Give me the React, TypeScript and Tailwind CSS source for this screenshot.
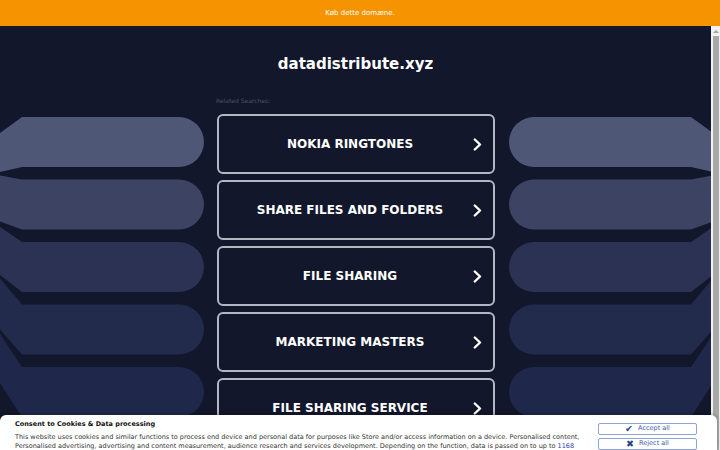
import { Fragment } from "react"

const searches = [
  "NOKIA RINGTONES",
  "SHARE FILES AND FOLDERS",
  "FILE SHARING",
  "MARKETING MASTERS",
  "FILE SHARING SERVICE",
]

// band colours from top to bottom, plus how far the slanted end drifts at the page edge
const bands = [
  { fill: "#4f5777", top: 16, bottom: 5 },
  { fill: "#3d4463", top: -4, bottom: -8 },
  { fill: "#2b3253", top: -15, bottom: -17 },
  { fill: "#232b4d", top: -26, bottom: -25 },
  { fill: "#1f284b", top: -33, bottom: -34 },
]

function SideArt({ flip }: { flip?: boolean }) {
  return (
    <svg width={flip ? 216 : 217} height={353} className="block shrink-0">
      <g transform={flip ? "translate(218,0) scale(-1,1)" : undefined}>
        {bands.map((b, i) => {
          const t = 20 + 62.5 * i
          const btm = t + 50
          return (
            <path
              key={i}
              fill={b.fill}
              d={`M0 ${t + b.top} L22 ${t} L179 ${t} A25 25 0 0 1 179 ${btm} L22 ${btm} L0 ${btm + b.bottom} Z`}
            />
          )
        })}
      </g>
    </svg>
  )
}

function Chevron() {
  return (
    <svg width="9" height="13" viewBox="0 0 9 13" className="shrink-0">
      <path d="M1.8 1.5 L7 6.5 L1.8 11.5" fill="none" stroke="white" strokeWidth="2.4" strokeLinecap="round" strokeLinejoin="round" />
    </svg>
  )
}

export default function App() {
  return (
    <div className="relative h-[450px] w-[720px] overflow-hidden bg-[#12172b] font-['DejaVu_Sans',sans-serif]">
      {/* Top banner */}
      <div className="flex h-[26px] items-center justify-center bg-[#f59300] text-[7px] text-white">
        Køb dette domæne.
      </div>

      <div className="flex h-[424px]">
        <div className="flex flex-1 flex-col">
          <h1 className="mt-[29px] text-center text-[15px] font-bold leading-[18px] text-white">datadistribute.xyz</h1>

          <div className="mt-[24px] flex">
            <SideArt />
            <div className="flex w-[278px] shrink-0 flex-col">
              <p className="-ml-px h-[8px] text-[6px] leading-[8px] text-[#4b5369]">Related Searches:</p>
              <div className="mt-[9px] flex flex-col gap-[6px]">
                {searches.map((s) => (
                  <div
                    key={s}
                    className="flex h-[60px] items-center rounded-[6px] border-2 border-[#b4b7c3] pl-[8px] pr-[11px]"
                  >
                    <span className="flex-1 text-center text-[12px] font-bold text-white">{s}</span>
                    <Chevron />
                  </div>
                ))}
              </div>
            </div>
            <SideArt flip />
          </div>
        </div>

        {/* Scrollbar */}
        <div className="flex w-[9px] flex-col bg-[#f1f1f1]">
          <div className="flex h-[10px] items-center justify-center">
            <div className="h-0 w-0 border-x-[3px] border-b-[3px] border-x-transparent border-b-[#a3a3a3]" />
          </div>
          <div className="ml-[2px] mr-px flex-1 bg-[#a8a8a8]" />
        </div>
      </div>

      {/* Cookie consent */}
      <div className="absolute bottom-0 left-0 flex h-[35px] w-[717px] rounded-t-[6px] bg-white pl-[15px] pr-[20px] shadow-[0_-1px_4px_rgba(0,0,0,0.25)]">
        <div className="flex-1 pt-[5px] text-[#333]">
          <p className="text-[6.5px] font-bold leading-[9px] text-[#111]">Consent to Cookies &amp; Data processing</p>
          <p className="mt-[3.5px] whitespace-nowrap text-[6.5px] leading-[9px]">
            This website uses cookies and similar functions to process end device and personal data for purposes like Store and/or access information on a device. Personalised content,
            <br />
            Personalised advertising, advertising and content measurement, audience research and services development. Depending on the function, data is passed on to up to{" "}
            <span className="text-[#3535b0]">1168</span>
          </p>
        </div>
        <div className="flex w-[99px] shrink-0 flex-col gap-[3px] pt-[8px]">
          {[
            { icon: "✔", label: "Accept all" },
            { icon: "✖", label: "Reject all" },
          ].map((b) => (
            <Fragment key={b.label}>
              <div className="flex h-[12px] items-center justify-center gap-[5px] rounded-[2px] border border-[#8ea4d2] text-[6.5px] text-[#3d5aa3]">
                <span className="text-[9.5px] leading-none text-[#24448c]">{b.icon}</span>
                {b.label}
              </div>
            </Fragment>
          ))}
        </div>
      </div>
    </div>
  )
}
